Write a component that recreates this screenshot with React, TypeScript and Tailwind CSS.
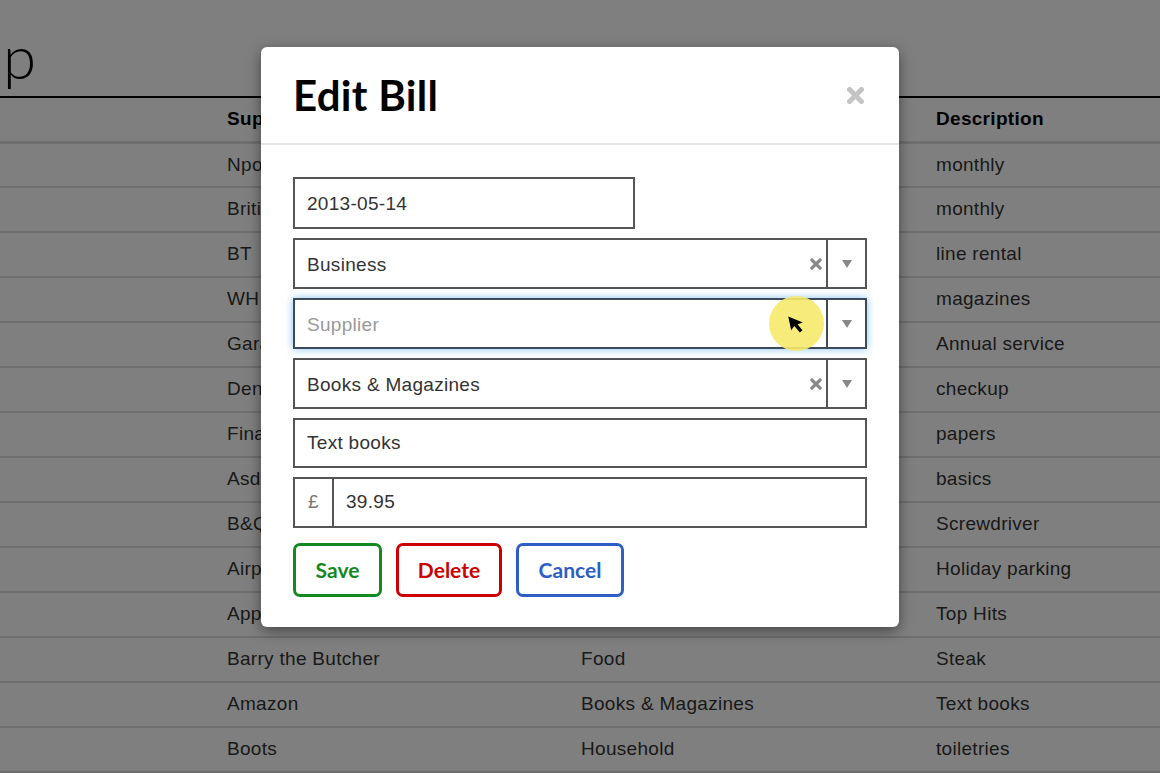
import { useState } from 'react'

const rows: [string, string, string][] = [
  ['Npower', 'Utilities', 'monthly'],
  ['British Gas', 'Utilities', 'monthly'],
  ['BT', 'Utilities', 'line rental'],
  ['WH Smith', 'Books & Magazines', 'magazines'],
  ['Garage', 'Car', 'Annual service'],
  ['Dentist', 'Health', 'checkup'],
  ['Financial Times', 'Books & Magazines', 'papers'],
  ['Asda', 'Food', 'basics'],
  ['B&Q', 'Household', 'Screwdriver'],
  ['Airport Parking', 'Travel', 'Holiday parking'],
  ['Apple', 'Entertainment', 'Top Hits'],
  ['Barry the Butcher', 'Food', 'Steak'],
  ['Amazon', 'Books & Magazines', 'Text books'],
  ['Boots', 'Household', 'toiletries'],
]

const sans = 'font-["Liberation_Sans",Arial,sans-serif] text-[19px] tracking-[0.3px]'
const round = 'font-["Lato","Open_Sans",sans-serif]'

function Cross({ size, stroke, color }: { size: number; stroke: number; color: string }) {
  return (
    <svg width={size} height={size} viewBox="0 0 10 10">
      <path d="M1.5 1.5L8.5 8.5M8.5 1.5L1.5 8.5" stroke={color} strokeWidth={stroke} strokeLinecap="round" />
    </svg>
  )
}

function Select({ value, placeholder, focused }: { value?: string; placeholder?: string; focused?: boolean }) {
  return (
    <div className={`h-[51px] flex border-2 ${focused ? 'border-[#3d4a5a] shadow-[0_0_8px_rgba(82,168,236,0.7)]' : 'border-[#555]'} bg-white`}>
      <div className={`flex-1 flex items-center px-[12px] pt-[3px] ${sans} ${value ? 'text-[#333]' : 'text-[#999]'}`}>{value ?? placeholder}</div>
      {value && <div className="flex items-center justify-center pr-[4px]"><Cross size={12} stroke={2.6} color="#888" /></div>}
      <div className={`w-[39px] flex items-center justify-center border-l-2 ${focused ? 'border-[#3d4a5a]' : 'border-[#555]'}`}>
        <svg width="10" height="8" viewBox="0 0 10 8"><path d="M0 0h10L5 8z" fill="#888" /></svg>
      </div>
    </div>
  )
}

export default function App() {
  const [date] = useState('2013-05-14')
  return (
    <div className="relative w-[1160px] h-[773px] overflow-hidden bg-white">
      <div className="h-[98px] border-b-2 border-black relative">
        <h1 className={`absolute left-[3px] top-[26px] text-[60px] font-light text-black leading-none ${round}`}>p</h1>
      </div>
      <table className={`w-full ${sans}`}>
        <thead>
          <tr className="h-[44px] border-b-[3px] border-[#ddd]">
            <th className="w-[227px]" />
            <th className="text-left font-bold text-black w-[354px]">Supplier</th>
            <th className="text-left font-bold text-black w-[355px]">Category</th>
            <th className="text-left font-bold text-black">Description</th>
          </tr>
        </thead>
        <tbody>
          {rows.map(r => (
            <tr key={r[0]} className="h-[45px] border-b-2 border-[#ddd] text-[#333]">
              <td />
              <td>{r[0]}</td>
              <td>{r[1]}</td>
              <td>{r[2]}</td>
            </tr>
          ))}
        </tbody>
      </table>

      <div className="absolute inset-0 bg-black/50" />

      <div className="absolute left-[261px] top-[47px] w-[638px] bg-white rounded-[6px] shadow-[0_4px_14px_rgba(0,0,0,0.45)]">
        <div className="h-[98px] flex items-center justify-between pl-[32px] pr-[35px] border-b-2 border-[#e5e5e5]">
          <h2 className={`text-[42px] font-bold text-black tracking-[0.3px] leading-none ${round}`}>Edit Bill</h2>
          <Cross size={17} stroke={3} color="#c4c4c4" />
        </div>
        <div className="px-[32px] pt-[32px] pb-[30px] flex flex-col gap-[9px]">
          <div className={`w-[342px] h-[52px] border-2 border-[#555] flex items-center px-[12px] pt-[2px] text-[#333] ${sans}`}>{date}</div>
          <Select value="Business" />
          <div className="relative">
            <Select placeholder="Supplier" focused />
            <div className="absolute left-[476px] top-[-2px] w-[55px] h-[55px] rounded-full bg-[#f6e96c]/90 flex items-center justify-center">
              <svg width="20" height="22" viewBox="0 0 20 22" className="ml-[2px]">
                <path d="M2 2 L2 16 L6 12.5 L10 20 L13 18.5 L9.5 11.5 L15 11 Z" fill="#000" transform="rotate(-12 8 11)" />
              </svg>
            </div>
          </div>
          <Select value="Books & Magazines" />
          <div className={`h-[50px] border-2 border-[#555] flex items-center px-[12px] text-[#333] ${sans}`}>Text books</div>
          <div className={`h-[51px] border-2 border-[#555] flex text-[#333] ${sans}`}>
            <div className="w-[39px] flex items-center justify-center border-r-2 border-[#555] text-[#777]">£</div>
            <div className="flex items-center px-[12px]">39.95</div>
          </div>
          <div className={`flex gap-[14px] mt-[6px] ${round} text-[21px] font-bold`}>
            <button className="w-[89px] h-[54px] border-[3px] border-[#13891f] text-[#13891f] rounded-[7px]">Save</button>
            <button className="w-[106px] h-[54px] border-[3px] border-[#cc0000] text-[#cc0000] rounded-[7px]">Delete</button>
            <button className="w-[108px] h-[54px] border-[3px] border-[#2d5ec6] text-[#2d5ec6] rounded-[7px]">Cancel</button>
          </div>
        </div>
      </div>
    </div>
  )
}
